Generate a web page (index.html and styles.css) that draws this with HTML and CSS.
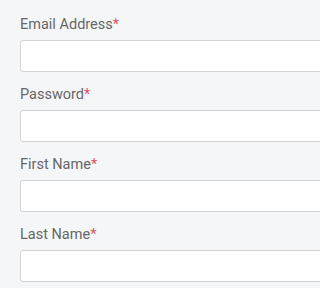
FILE: index.html
```html
<!DOCTYPE html>
<html>
<head>
<meta charset="utf-8">
<link rel="stylesheet" href="styles.css">
</head>
<body>
<form class="form">
  <div class="field">
    <label class="label">Email Address<span class="req">*</span></label>
    <input class="input" type="text">
  </div>
  <div class="field">
    <label class="label">Password<span class="req">*</span></label>
    <input class="input" type="password">
  </div>
  <div class="field">
    <label class="label">First Name<span class="req">*</span></label>
    <input class="input" type="text">
  </div>
  <div class="field">
    <label class="label">Last Name<span class="req">*</span></label>
    <input class="input" type="text">
  </div>
</form>
</body>
</html>
```
FILE: styles.css
```css
html, body {
  margin: 0;
  padding: 0;
  background: #f5f6f8;
  overflow: hidden;
}
body {
  font-family: Roboto, "Noto Sans", sans-serif;
}
.form {
  padding: 16px 0 0 20px;
  overflow: hidden;
}
.field {
  display: flex;
  flex-direction: column;
  margin-bottom: 14px;
}
.label {
  font-size: 14.5px;
  line-height: 18px;
  color: #666666;
  margin-bottom: 6px;
}
.req {
  color: #e4505b;
}
.input {
  box-sizing: border-box;
  height: 32px;
  width: calc(100% + 40px);
  margin: 0;
  border: 1px solid #d3d3d3;
  border-radius: 3px;
  background: #ffffff;
  outline: none;
  padding: 0 8px;
}
```
